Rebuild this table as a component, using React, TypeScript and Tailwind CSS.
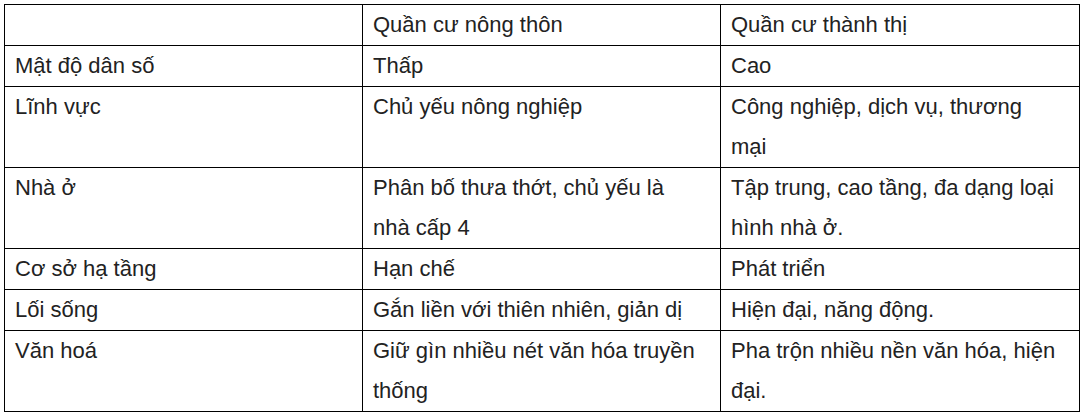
import React from "react"

const rows: [string, string, string][] = [
  ["", "Quần cư nông thôn", "Quần cư thành thị"],
  ["Mật độ dân số", "Thấp", "Cao"],
  ["Lĩnh vực", "Chủ yếu nông nghiệp", "Công nghiệp, dịch vụ, thương mại"],
  ["Nhà ở", "Phân bố thưa thớt, chủ yếu là nhà cấp 4", "Tập trung, cao tầng, đa dạng loại hình nhà ở."],
  ["Cơ sở hạ tầng", "Hạn chế", "Phát triển"],
  ["Lối sống", "Gắn liền với thiên nhiên, giản dị", "Hiện đại, năng động."],
  ["Văn hoá", "Giữ gìn nhiều nét văn hóa truyền thống", "Pha trộn nhiều nền văn hóa, hiện đại."],
]

export default function App() {
  return (
    <div className="w-[1083px] h-[417px] bg-white pt-[4px] pl-[4px] font-['Liberation_Sans',Arial,sans-serif] text-[#222]">
      <table className="w-[1075px] border-collapse table-fixed text-[22px] leading-[40px]">
        <colgroup>
          <col className="w-[358px]" />
          <col className="w-[358px]" />
          <col className="w-[359px]" />
        </colgroup>
        <tbody>
          {rows.map((r, i) => (
            <tr key={i}>
              {r.map((c, j) => (
                <td key={j} className="border border-black pl-[10px] pr-[16px] py-0 align-top">
                  {c}
                </td>
              ))}
            </tr>
          ))}
        </tbody>
      </table>
    </div>
  )
}
